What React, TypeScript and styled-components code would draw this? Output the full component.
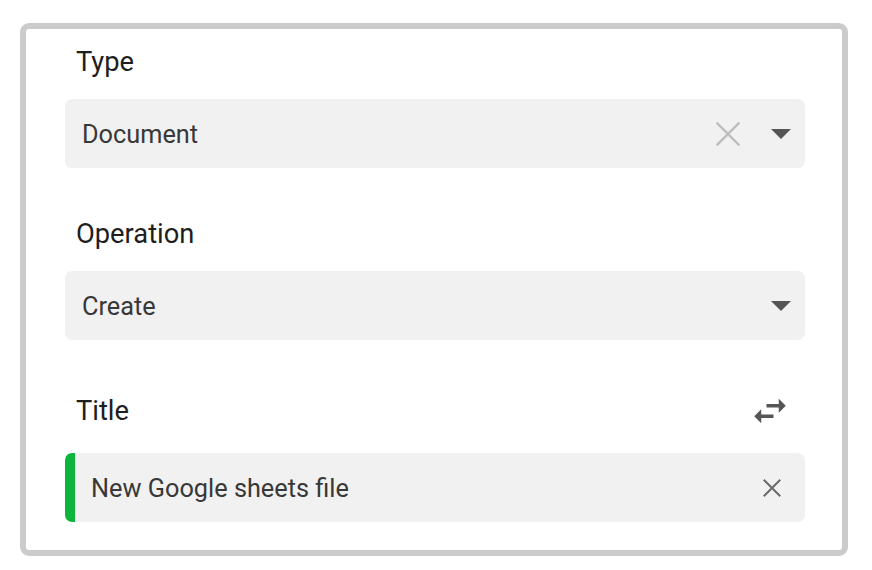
import { FC } from "react"
import styled, { createGlobalStyle } from "styled-components"

const GlobalStyle = createGlobalStyle`
  html, body {
    margin: 0;
    padding: 0;
    background: #ffffff;
  }
  body {
    font-family: Roboto, "Liberation Sans", Arial, sans-serif;
  }
`

const ClearIcon: FC<{ size: number; color: string; stroke: number }> = ({ size, color, stroke }) => (
  <svg width={size} height={size} viewBox={`0 0 ${size} ${size}`}>
    <path d={`M1.5 1.5L${size - 1.5} ${size - 1.5}M${size - 1.5} 1.5L1.5 ${size - 1.5}`} stroke={color} strokeWidth={stroke} strokeLinecap="square" fill="none" />
  </svg>
)

const CaretIcon = () => (
  <svg width="20" height="10" viewBox="0 0 20 10">
    <path d="M0 0h20L10 10z" fill="#555555" />
  </svg>
)

const SwapIcon = () => (
  <svg width="42" height="42" viewBox="0 0 24 24">
    <path d="M6.99 11L3 15l3.99 4v-3H14v-2H6.99v-3zM21 9l-3.99-4v3H10v2h7.01v3L21 9z" fill="#555555" />
  </svg>
)

type TFieldProps = {
  label: string
  value: string
  clearable?: boolean
  dropdown?: boolean
  mapped?: boolean
}

const Field: FC<TFieldProps> = ({ label, value, clearable, dropdown, mapped }) => (
  <Section>
    <LabelRow>
      <Label>{label}</Label>
      {mapped && <SwapButton><SwapIcon /></SwapButton>}
    </LabelRow>
    <Input $mapped={mapped}>
      <Value>{value}</Value>
      {dropdown && clearable && (
        <Clear>
          <ClearIcon size={24} color="#bdbdbd" stroke={2.4} />
        </Clear>
      )}
      {dropdown && (
        <Caret>
          <CaretIcon />
        </Caret>
      )}
      {!dropdown && clearable && (
        <TextClear>
          <ClearIcon size={18} color="#6a6a6a" stroke={2} />
        </TextClear>
      )}
    </Input>
  </Section>
)

const App: FC = () => (
  <Page>
    <GlobalStyle />
    <Panel>
      <Field label="Type" value="Document" clearable dropdown />
      <Field label="Operation" value="Create" dropdown />
      <Field label="Title" value="New Google sheets file" clearable mapped />
    </Panel>
  </Page>
)

export default App

//Styled Components

const Page = styled.div`
  padding: 23px 24px 14px 20px;
`
const Panel = styled.div`
  box-sizing: border-box;
  width: 828px;
  height: 533px;
  border: 6px solid #cbcbcb;
  border-radius: 9px;
  background: #ffffff;
  padding: 17px 37px 0 39px;
  display: flex;
  flex-direction: column;
  gap: 50px;
`
const Section = styled.div`
  display: flex;
  flex-direction: column;
  gap: 21px;
`
const LabelRow = styled.div`
  display: flex;
  align-items: center;
  justify-content: space-between;
  padding: 0 14px 0 11px;
  min-height: 32px;
`
const Label = styled.div`
  font-size: 27.3px;
  line-height: 32px;
  color: #1e1e1e;
`
const SwapButton = styled.div`
  display: flex;
  width: 42px;
  height: 42px;
  cursor: pointer;
`
const Input = styled.div<{ $mapped?: boolean }>`
  box-sizing: border-box;
  height: 69px;
  display: flex;
  align-items: center;
  background: #f1f1f1;
  border-radius: 7px;
  border-left: ${(p) => (p.$mapped ? "10px solid #0db53c" : "none")};
  padding: 0 14px 0 ${(p) => (p.$mapped ? "16px" : "17px")};
`
const Value = styled.div`
  flex: 1;
  font-size: 25.3px;
  padding-top: 2px;
  color: #383838;
`
const Clear = styled.div`
  display: flex;
  margin-right: 31px;
`
const Caret = styled.div`
  display: flex;
`
const TextClear = styled.div`
  display: flex;
  margin-right: 10px;
`
